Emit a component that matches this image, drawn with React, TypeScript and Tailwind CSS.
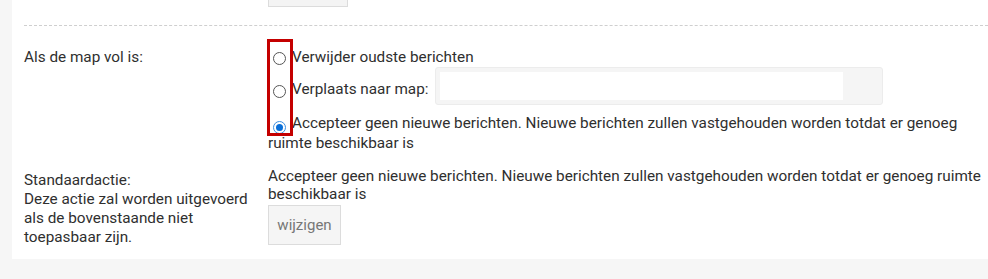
import React from "react";

function Radio({ checked = false }: { checked?: boolean }) {
  return checked ? (
    <span className="inline-flex h-[13px] w-[13px] items-center justify-center rounded-full border border-[#3d8fe0] bg-white align-[-3px]">
      <span className="h-[7px] w-[7px] rounded-full bg-[#0a6fd8]" />
    </span>
  ) : (
    <span className="inline-block h-[13px] w-[13px] rounded-full border border-[#555] bg-white align-[-3px]" />
  );
}

export default function App() {
  return (
    <div className="h-[279px] overflow-hidden bg-[#f6f6f6] font-['Roboto',sans-serif] text-[15.3px] text-[#2f2f2f]">
      <div className="relative ml-[12px] bg-white pb-[12px] pl-[12px]">
        <div className="ml-[244px] h-[7px] w-[80px] border border-t-0 border-[#dcdcdc] bg-[#f4f4f4]" />
        <div className="mt-[18px] border-t border-dashed border-[#cfcfcf]" />

        <div className="flex pt-[22px]">
          <div className="w-[244px] shrink-0 leading-[19px]">Als de map vol is:</div>
          <div className="flex-1 leading-[18px]">
            <label className="block">
              <span className="ml-[5px] mr-[6px]">
                <Radio />
              </span>
              Verwijder oudste berichten
            </label>
            <div className="mt-[1px] flex items-start">
              <span className="ml-[5px] mr-[6px] mt-[18px] flex">
                <Radio />
              </span>
              <span className="mt-[13px]">Verplaats naar map:</span>
              <div className="ml-[7px] flex h-[38px] w-[448px] rounded-[3px] border border-[#ececec] bg-[#f5f5f5] p-[4px]">
                <div className="h-full w-[403px] bg-white" />
              </div>
            </div>
            <label className="mt-[9px] block pr-[8px]">
              <span className="ml-[5px] mr-[6px]">
                <Radio checked />
              </span>
              Accepteer geen nieuwe berichten. Nieuwe berichten zullen vastgehouden worden totdat er genoeg ruimte beschikbaar is
            </label>
          </div>
        </div>

        <div className="mt-[15px] flex">
          <div className="w-[244px] shrink-0 pt-[4px] leading-[19px]">
            Standaardactie:
            <br />
            Deze actie zal worden uitgevoerd als de bovenstaande niet toepasbaar zijn.
          </div>
          <div className="flex-1 pr-[4px] leading-[18px]">
            <div>
              Accepteer geen nieuwe berichten. Nieuwe berichten zullen vastgehouden worden totdat er genoeg ruimte beschikbaar is
            </div>
            <button className="mt-[2px] h-[40px] w-[73px] border border-[#dcdcdc] bg-[#f5f5f5] text-[15px] text-[#777]">
              wijzigen
            </button>
          </div>
        </div>

        <div className="pointer-events-none absolute left-[255px] top-[39px] h-[97px] w-[26px] border-[3px] border-[#c40000]" />
      </div>
    </div>
  );
}
